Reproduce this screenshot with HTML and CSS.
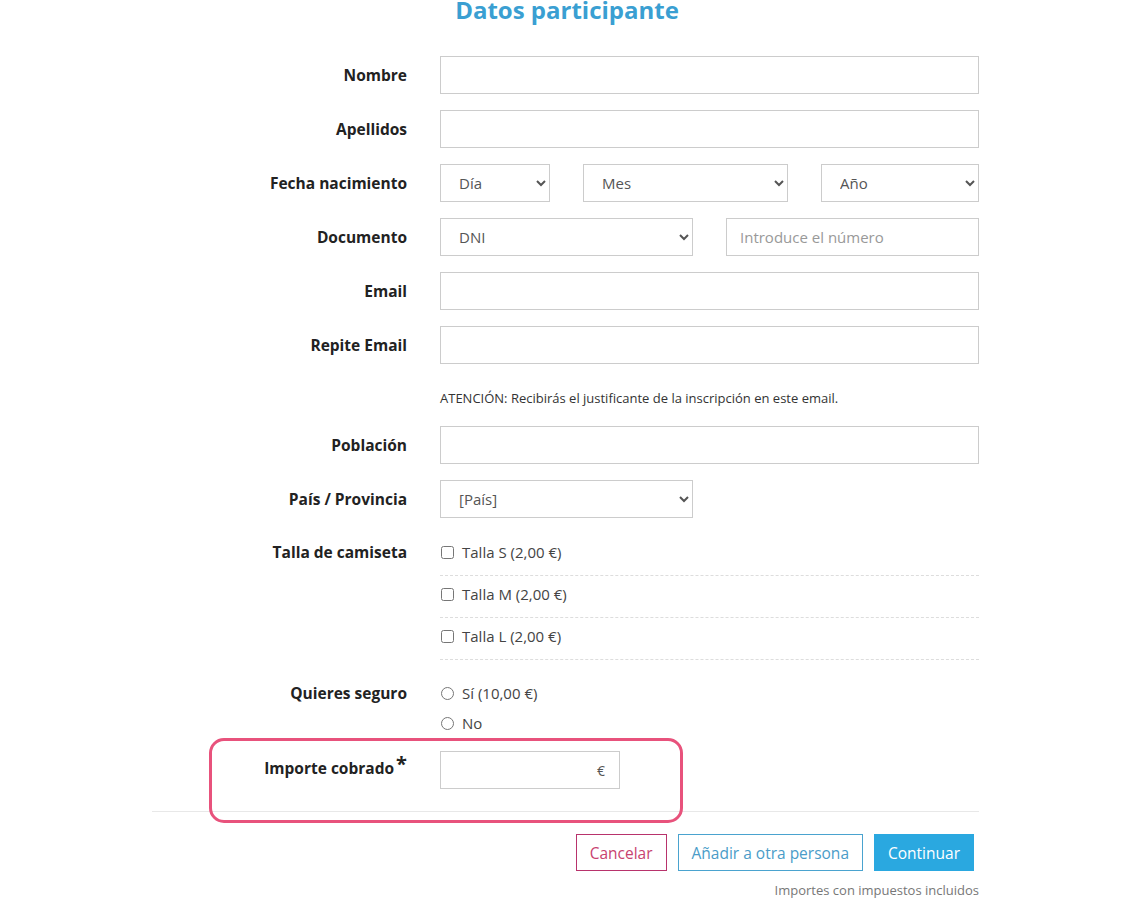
FILE: index.html
```html
<!DOCTYPE html>
<html lang="es">
<head>
  <meta charset="UTF-8" />
  <title>Datos participante</title>
  <link rel="stylesheet" href="styles.css">
</head>
<body>
  <div class="form-wrap">
    <h1>Datos participante</h1>

    <div class="row">
      <label class="lbl" for="nombre">Nombre</label>
      <div class="field"><input type="text" id="nombre" class="ctrl" /></div>
    </div>

    <div class="row">
      <label class="lbl" for="apellidos">Apellidos</label>
      <div class="field"><input type="text" id="apellidos" class="ctrl" /></div>
    </div>

    <div class="row">
      <label class="lbl">Fecha nacimiento</label>
      <div class="field split">
        <select class="ctrl sel-dia"><option>Día</option></select>
        <select class="ctrl sel-mes"><option>Mes</option></select>
        <select class="ctrl sel-ano"><option>Año</option></select>
      </div>
    </div>

    <div class="row">
      <label class="lbl">Documento</label>
      <div class="field split">
        <select class="ctrl half"><option>DNI</option></select>
        <input type="text" class="ctrl half" placeholder="Introduce el número" />
      </div>
    </div>

    <div class="row">
      <label class="lbl" for="email">Email</label>
      <div class="field"><input type="text" id="email" class="ctrl" /></div>
    </div>

    <div class="row">
      <label class="lbl" for="email2">Repite Email</label>
      <div class="field"><input type="text" id="email2" class="ctrl" /></div>
    </div>

    <!-- aviso del email -->
    <div class="row note-row">
      <div class="lbl"></div>
      <div class="field note">ATENCIÓN: Recibirás el justificante de la inscripción en este email.</div>
    </div>

    <div class="row">
      <label class="lbl" for="poblacion">Población</label>
      <div class="field"><input type="text" id="poblacion" class="ctrl" /></div>
    </div>

    <div class="row">
      <label class="lbl">País / Provincia</label>
      <div class="field">
        <select class="ctrl half"><option>[País]</option></select>
      </div>
    </div>

    <!-- extras -->
    <div class="row row-list">
      <label class="lbl lbl-list">Talla de camiseta</label>
      <div class="field">
        <label class="check-item"><input type="checkbox" /> Talla S (2,00 €)</label>
        <label class="check-item"><input type="checkbox" /> Talla M (2,00 €)</label>
        <label class="check-item"><input type="checkbox" /> Talla L (2,00 €)</label>
      </div>
    </div>

    <div class="row row-radio">
      <label class="lbl lbl-radio">Quieres seguro</label>
      <div class="field">
        <label class="radio-item"><input type="radio" name="seguro" /> Sí (10,00 €)</label>
        <label class="radio-item"><input type="radio" name="seguro" /> No</label>
      </div>
    </div>

    <div class="row row-importe">
      <label class="lbl" for="importe">Importe cobrado <span class="req">*</span></label>
      <div class="field">
        <div class="money">
          <input type="text" id="importe" />
          <span>€</span>
        </div>
      </div>
      <div class="highlight"></div>
    </div>

    <hr class="sep" />

    <div class="actions">
      <button class="btn btn-cancel">Cancelar</button>
      <button class="btn btn-add">Añadir a otra persona</button>
      <button class="btn btn-go">Continuar</button>
    </div>
    <div class="tax-note">Importes con impuestos incluidos</div>
  </div>
</body>
</html>
```

FILE: styles.css
```css
/* base */
body {
  margin: 0;
  background: #fff;
  color: #222;
  font-family: "Open Sans", "Noto Sans", Arial, sans-serif;
}
.form-wrap {
  width: 827px;
  margin: 0 auto;
}
h1 {
  margin: -4px 0 32px;
  text-align: center;
  font-size: 24px;
  line-height: 28px;
  font-weight: 700;
  color: #3a9fd2;
  padding-left: 3px;
}

/* filas */
.row {
  display: flex;
  align-items: center;
  gap: 33px;
  margin-bottom: 16px;
  position: relative;
}
.lbl {
  width: 255px;
  flex: none;
  text-align: right;
  font-size: 15.5px;
  font-weight: 700;
  color: #222;
}
.field {
  width: 539px;
  flex: none;
}
.split {
  display: flex;
  justify-content: space-between;
}

/* controles */
.ctrl {
  box-sizing: border-box;
  width: 100%;
  height: 38px;
  border: 1px solid #ccc;
  border-radius: 0;
  background: #fff;
  font-family: inherit;
  font-size: 15px;
  color: #555;
  padding: 0 13px;
  outline: none;
}
select.ctrl {
  padding-left: 14px;
  padding-right: 8px;
}
.ctrl::placeholder {
  color: #999;
}
.sel-dia { width: 110px; }
.sel-mes { width: 205px; }
.sel-ano { width: 158px; }
.half { width: 253px; }

/* aviso */
.note-row {
  margin-top: 24px;
  margin-bottom: 18px;
}
.note {
  font-size: 13px;
  line-height: 20px;
  color: #333;
}

/* checkbox / radio */
.row-list,
.row-radio {
  align-items: flex-start;
}
.row-list {
  margin-bottom: 18px;
}
.lbl-list {
  line-height: 20px;
  padding-top: 8px;
}
.lbl-radio {
  line-height: 20px;
  padding-top: 5px;
}
.check-item,
.radio-item {
  display: flex;
  align-items: center;
  font-size: 15px;
  color: #444;
  line-height: 20px;
}
.check-item {
  padding: 8px 0 13px;
  border-bottom: 1px dashed #ddd;
}
.radio-item {
  padding: 5px 0;
}
.check-item input,
.radio-item input {
  margin: 0 8px 0 1px;
  width: 13px;
  height: 13px;
}

/* importe */
.row-importe {
  margin-top: -3px;
  margin-bottom: 22px;
}
.row-importe .lbl {
  padding-bottom: 4px;
}
.req {
  font-size: 20px;
  vertical-align: top;
  line-height: 14px;
  margin-left: -2px;
}
.money {
  box-sizing: border-box;
  display: flex;
  align-items: center;
  width: 180px;
  height: 38px;
  border: 1px solid #ccc;
  padding-right: 14px;
}
.money input {
  flex: 1;
  min-width: 0;
  border: none;
  outline: none;
  height: 34px;
  font-family: inherit;
  font-size: 15px;
}
.money span {
  font-size: 14px;
  color: #555;
}
/* marco resaltado */
.highlight {
  position: absolute;
  left: 57px;
  top: -13px;
  width: 468px;
  height: 79px;
  border: 3px solid #e8527c;
  border-radius: 15px;
  pointer-events: none;
}

.sep {
  margin: 0;
  border: none;
  border-top: 1px solid #e8e8e8;
}

/* botones */
.actions {
  display: flex;
  justify-content: flex-end;
  gap: 11px;
  margin-top: 22px;
  padding-right: 5px;
}
.btn {
  height: 37px;
  padding: 0 13px;
  font-family: inherit;
  font-size: 15.5px;
  background: #fff;
  cursor: pointer;
}
.btn-cancel {
  border: 1px solid #b8336c;
  color: #c8426f;
}
.btn-add {
  border: 1px solid #4aa3cf;
  color: #4a9cc8;
}
.btn-go {
  border: 1px solid #2aa8e0;
  background: #2aa8e0;
  color: #fff;
}
.tax-note {
  margin-top: 10px;
  text-align: right;
  font-size: 13px;
  color: #777;
}
```
